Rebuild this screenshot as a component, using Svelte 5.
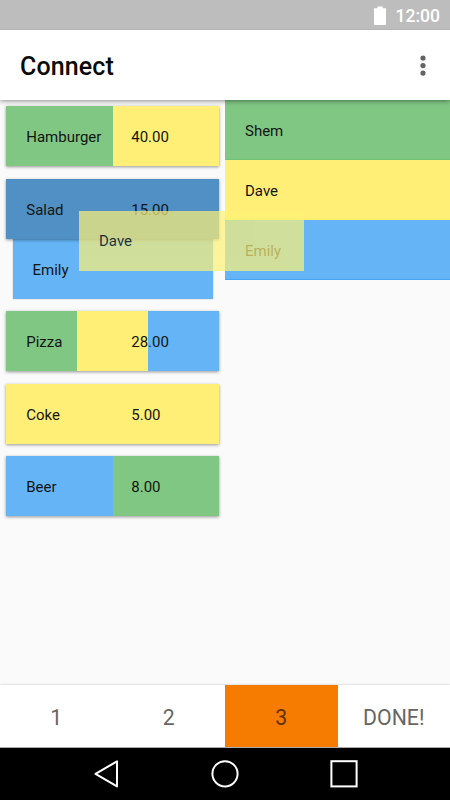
<script>
  const GREEN = '#81c784';
  const YELLOW = '#ffef76';
  const BLUE = '#64b4f6';

  const items = [
    { name: 'Hamburger', price: '40.00', shares: [GREEN, YELLOW] },
    { name: 'Salad', price: '15.00', shares: ['#5090c5'], people: ['Emily'] },
    { name: 'Pizza', price: '28.00', shares: [GREEN, YELLOW, BLUE] },
    { name: 'Coke', price: '5.00', shares: [YELLOW] },
    { name: 'Beer', price: '8.00', shares: [BLUE, GREEN] }
  ];

  const people = [
    { name: 'Shem', color: GREEN, edge: '#72bf76' },
    { name: 'Dave', color: YELLOW, edge: '#ffee6e' },
    { name: 'Emily', color: BLUE, edge: '#42a5f5' }
  ];

  const tabs = ['1', '2', '3', 'DONE!'];
  let active = $state(2);
</script>

<div class="screen">
  <div class="status">
    <svg width="13" height="19" viewBox="0 0 13 19"><path d="M0 2.2H3.4V0.5H8.8V2.2H12V19H0Z" fill="#fff" /></svg>
    <span>12:00</span>
  </div>

  <header>
    <h1>Connect</h1>
    <svg width="6" height="22" viewBox="0 0 6 22" fill="#636363">
      <circle cx="3" cy="3.1" r="2.6" /><circle cx="3" cy="10.6" r="2.6" /><circle cx="3" cy="18.1" r="2.6" />
    </svg>
  </header>

  <main>
    <section class="items">
      {#each items as item}
        <div class="item">
          <div class="card">
            <div class="shares">
              {#each item.shares as color}<i style:background={color}></i>{/each}
            </div>
            <span class="name">{item.name}</span>
            <span class="price">{item.price}</span>
          </div>
          {#each item.people ?? [] as person}
            <div class="sub">{person}</div>
          {/each}
        </div>
      {/each}
    </section>
    <section class="people">
      {#each people as p}
        <div class="person" style:background={p.color} style:--edge={p.edge}>{p.name}</div>
      {/each}
    </section>
    <div class="dragged">Dave</div>
  </main>

  <div class="tabs">
    {#each tabs as tab, i}
      <button class:active={active === i} onclick={() => (active = i)}>{tab}</button>
    {/each}
  </div>

  <nav>
    <svg width="450" height="52" viewBox="0 0 450 52" fill="none" stroke="#fff" stroke-width="2">
      <path d="M117 13.3V38.4L95.5 25.8Z" stroke-linejoin="round" />
      <circle cx="225" cy="25.8" r="12.6" />
      <rect x="331.4" y="13.2" width="25.2" height="25.2" />
    </svg>
  </nav>
</div>

<style>
  :global(body) { margin: 0; }
  .screen {
    width: 450px;
    height: 800px;
    display: flex;
    flex-direction: column;
    overflow: hidden;
    background: #fafafa;
    color: #131513;
    font: 15px/60px Roboto, sans-serif;
    letter-spacing: 0;
  }
  .status {
    position: relative;
    z-index: 2;
    height: 30px;
    box-sizing: border-box;
    padding: 2px 10px 0 0;
    display: flex;
    align-items: center;
    justify-content: flex-end;
    gap: 9px;
    background: #bdbdbd;
    border-bottom: 1px solid #b5b5b5;
    color: #fff;
    font-size: 17.5px;
    font-weight: 500;
    line-height: 28px;
  }
  header {
    position: relative;
    z-index: 1;
    height: 70px;
    box-sizing: border-box;
    padding: 1px 25px 0 20px;
    display: flex;
    align-items: center;
    justify-content: space-between;
    background: #fff;
    box-shadow: 0 1px 5px rgba(0, 0, 0, 0.45);
  }
  header svg { margin-right: -0.5px; }
  h1 {
    margin: 2px 0 0;
    font-size: 25px;
    font-weight: 500;
    letter-spacing: 0.1px;
    color: #0a0a0a;
  }
  main {
    position: relative;
    flex: 1;
    display: flex;
  }
  section { width: 225px; }
  .items {
    box-sizing: border-box;
    padding: 6.25px;
    display: flex;
    flex-direction: column;
    gap: 12.5px;
  }
  .card {
    position: relative;
    z-index: 1;
    height: 60px;
    box-sizing: border-box;
    padding-left: 20px;
    display: flex;
    line-height: 62px;
    box-shadow: 0 1px 3px rgba(0, 0, 0, 0.4);
  }
  .shares {
    position: absolute;
    inset: 0;
    display: flex;
  }
  .shares i { flex: 1; }
  .name, .price { position: relative; }
  .name { width: 105px; }
  .sub {
    margin: 0 6.25px;
    height: 60px;
    padding-left: 20px;
    line-height: 62px;
    background: #64b4f6;
    box-shadow: 0 0 1px rgba(0, 0, 0, 0.4);
  }
  .person {
    height: 60px;
    box-sizing: border-box;
    padding-left: 20px;
    line-height: 62px;
    border-bottom: 1px solid var(--edge);
  }
  .dragged {
    position: absolute;
    z-index: 2;
    left: 79px;
    top: 110.6px;
    width: 205px;
    height: 60px;
    padding-left: 20px;
    line-height: 61px;
    background: #fff176;
    color: #000;
    opacity: 0.7;
  }
  .tabs {
    height: 63px;
    box-sizing: border-box;
    display: flex;
    background: #fff;
    border-bottom: 1px solid #aaa;
    box-shadow: 0 0 2px rgba(0, 0, 0, 0.25);
  }
  button {
    flex: 1;
    border: 0;
    padding: 2px 0 0;
    background: none;
    color: #666;
    font: 21.25px Roboto, sans-serif;
  }
  button.active { background: #f57c00; color: #623200; }
  nav { height: 52px; background: #000; }
  nav svg { display: block; }
</style>
